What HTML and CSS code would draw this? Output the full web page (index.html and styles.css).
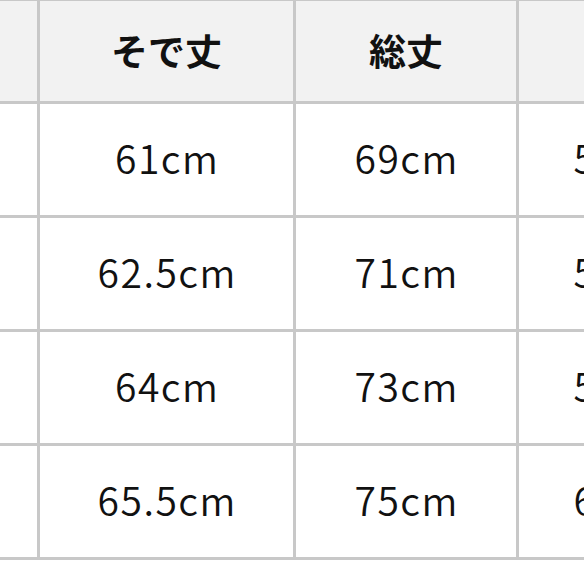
FILE: index.html
```html
<!DOCTYPE html>
<html lang="ja">
<head>
<meta charset="utf-8">
<link rel="stylesheet" href="styles.css">
</head>
<body>
<div class="frame">
  <div class="sheet">
    <div class="cell head">サイズ</div>
    <div class="cell head">そで丈</div>
    <div class="cell head">総丈</div>
    <div class="cell head">身幅</div>

    <div class="cell">S</div>
    <div class="cell">61cm</div>
    <div class="cell">69cm</div>
    <div class="cell">54cm</div>

    <div class="cell">M</div>
    <div class="cell">62.5cm</div>
    <div class="cell">71cm</div>
    <div class="cell">56cm</div>

    <div class="cell">L</div>
    <div class="cell">64cm</div>
    <div class="cell">73cm</div>
    <div class="cell">58cm</div>

    <div class="cell">XL</div>
    <div class="cell">65.5cm</div>
    <div class="cell">75cm</div>
    <div class="cell">60cm</div>
  </div>
</div>
</body>
</html>
```
FILE: styles.css
```css
html, body {
  margin: 0;
  padding: 0;
  overflow: hidden;
  background: #ffffff;
}
.frame {
  width: 584px;
  height: 584px;
  overflow: hidden;
}
.sheet {
  display: grid;
  grid-template-columns: 250px 253px 220px 212px;
  grid-template-rows: 100px 111px 111px 111px 111px;
  gap: 3px;
  padding: 3px;
  width: max-content;
  background: #c8c8c8;
  margin-left: -216px;
  margin-top: -2px;
  font-family: "Noto Sans CJK JP", "Noto Sans", sans-serif;
  color: #111111;
}
.cell {
  background: #ffffff;
  display: flex;
  align-items: center;
  justify-content: center;
  padding-bottom: 6px;
  padding-left: 1.5px;
  box-sizing: border-box;
  font-size: 39px;
  font-weight: 350;
  letter-spacing: 1.5px;
}
.head {
  background: #f2f2f2;
  padding-bottom: 2px;
  padding-left: 0;
  font-size: 37px;
  font-weight: 700;
  letter-spacing: 0;
}
```
